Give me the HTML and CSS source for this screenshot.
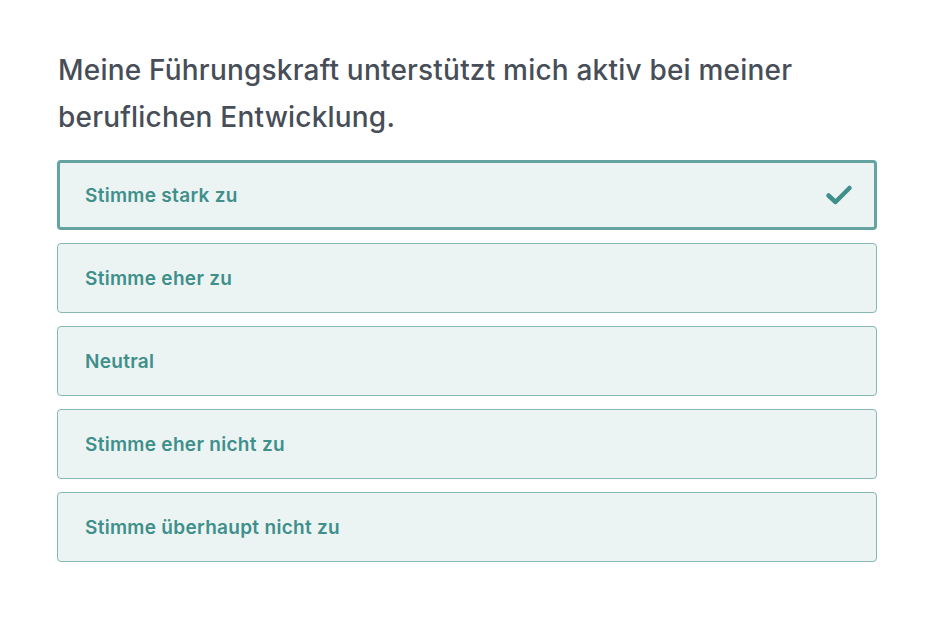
FILE: index.html
```html
<!DOCTYPE html>
<html>

<head>
  <meta charset="utf-8">
  <link rel="stylesheet" href="styles.css">
</head>

<body>
  <div class="question">
    <h1 class="question-title">Meine Führungskraft unterstützt mich aktiv bei meiner beruflichen Entwicklung.</h1>

    <ul class="answers">
      <li class="answer selected">
        <span>Stimme stark zu</span>
        <svg class="check" width="28" height="22" viewBox="0 0 28 22">
          <path d="M3.5 11.5 L10.5 18 L24.5 4" fill="none" stroke="#3f8f8b" stroke-width="4.5" stroke-linecap="round" stroke-linejoin="round" />
        </svg>
      </li>
      <li class="answer">Stimme eher zu</li>
      <li class="answer">Neutral</li>
      <li class="answer">Stimme eher nicht zu</li>
      <li class="answer">Stimme überhaupt nicht zu</li>
    </ul>
  </div>
</body>

</html>
```

FILE: styles.css
```css
body {
  margin: 0;
  background: #fff;
  font-family: Inter, "Open Sans", sans-serif;
}

/* Question block */
.question {
  width: 820px;
  padding: 47px 0 0 57px;
}

.question-title {
  margin: 0 0 19px 1px;
  max-width: 790px;
  font-size: 28px;
  line-height: 47px;
  font-weight: 500;
  letter-spacing: 0.2px;
  color: #474e58;
}

/* Answer list */
.answers {
  list-style-type: none;
  margin: 0;
  padding: 0;
  display: flex;
  flex-direction: column;
  gap: 13px;
}

.answer {
  box-sizing: border-box;
  height: 70px;
  display: flex;
  align-items: center;
  justify-content: space-between;
  padding: 0 27px;
  background-color: #ebf4f3;
  border: 1px solid #86b9b6;
  border-radius: 4px;
  font-size: 19px;
  font-weight: 600;
  letter-spacing: 0.3px;
  color: #3f8f8b;
  cursor: pointer;
}

.answer.selected {
  border: 3px solid #64a39f;
  padding: 0 21px 0 25px;
}
```
